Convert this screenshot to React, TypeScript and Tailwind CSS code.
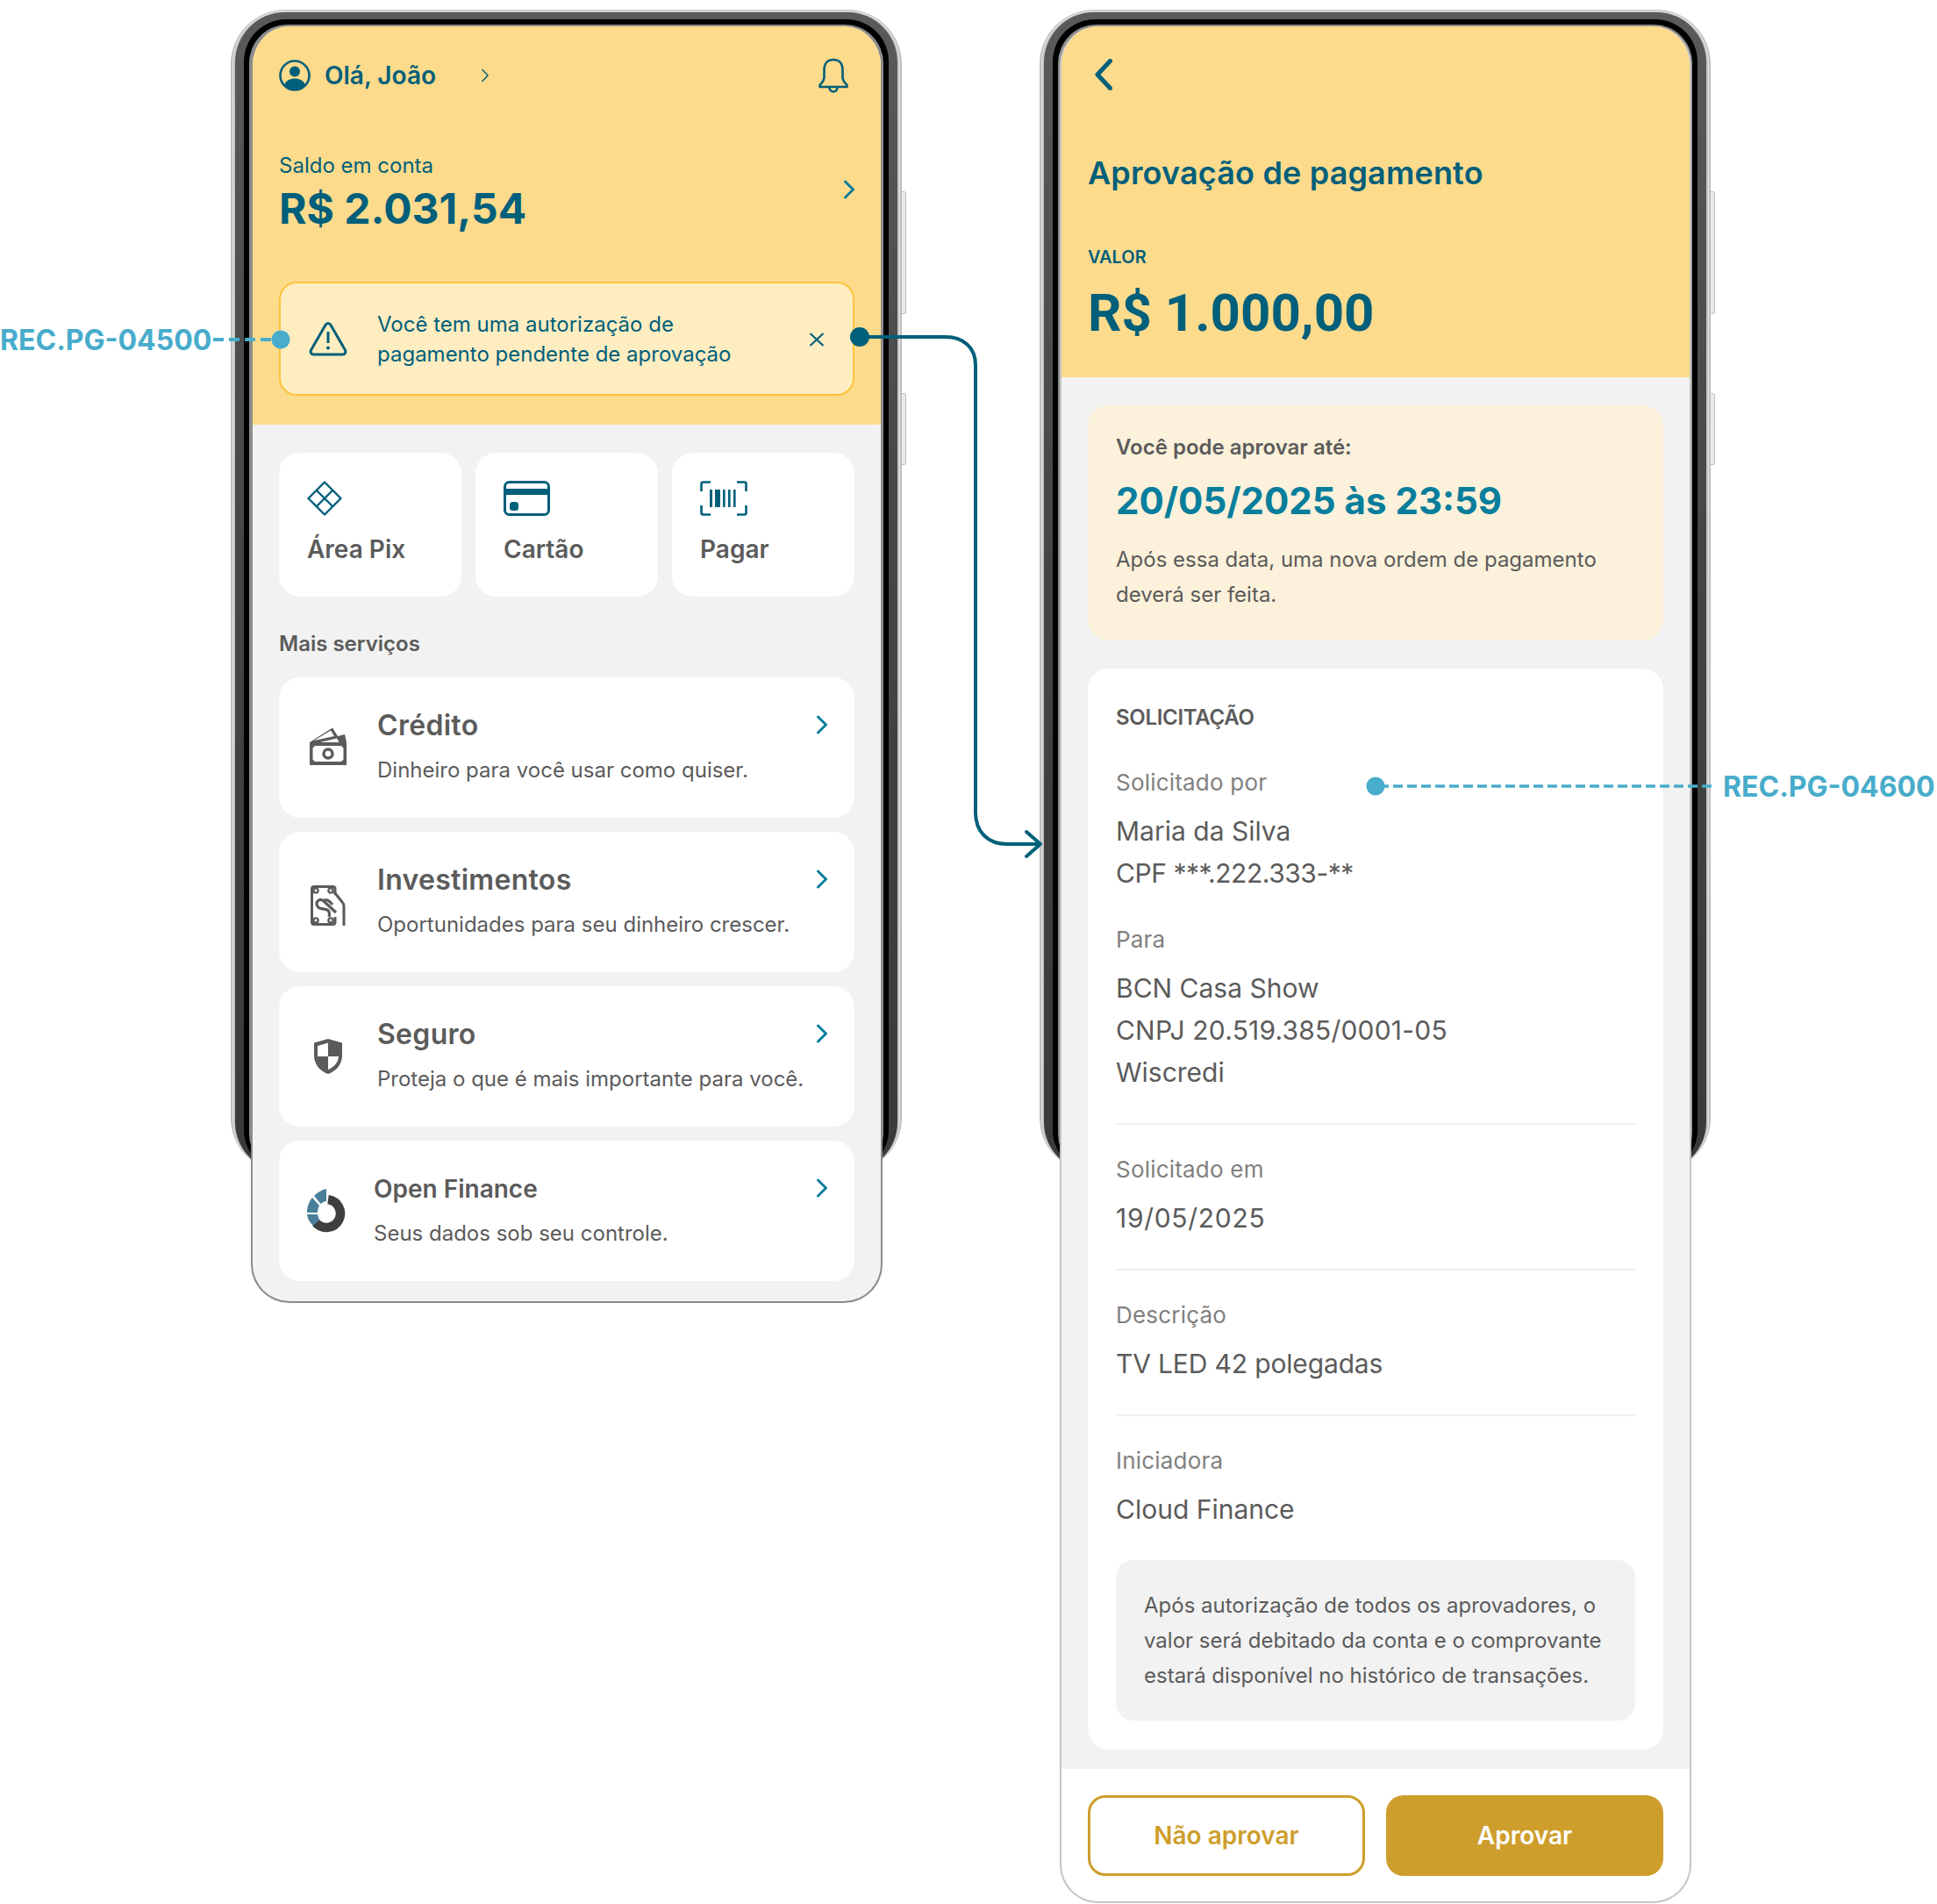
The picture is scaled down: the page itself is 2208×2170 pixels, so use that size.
// App.tsx
const TEAL = "#005F7A";
const GRAY = "#5B5B5B";

const Chevron = ({ className = "" }: { className?: string }) => (
  <svg viewBox="0 0 14 22" fill="none" className={className}>
    <path d="M2.5 2 L11.5 11 L2.5 20" stroke="currentColor" strokeWidth="3" strokeLinecap="round" strokeLinejoin="round" />
  </svg>
);

const UserIcon = () => (
  <svg viewBox="0 0 36 36" className="w-[36px] h-[36px] shrink-0">
    <circle cx="18" cy="18" r="16.5" fill="none" stroke={TEAL} strokeWidth="2.6" />
    <circle cx="18" cy="13.5" r="6" fill={TEAL} />
    <path d="M6 29 C8 23.5 12.5 21.5 18 21.5 C23.5 21.5 28 23.5 30 29 C27 32.6 22.8 34.5 18 34.5 C13.2 34.5 9 32.6 6 29 Z" fill={TEAL} />
  </svg>
);

const BellIcon = () => (
  <svg viewBox="0 0 36 40" fill="none" className="w-[36px] h-[40px]">
    <path d="M18 2 C11 2 7.5 7 7.5 13.5 V22 C7.5 26 5.5 28 2.5 31 V33 H33.5 V31 C30.5 28 28.5 26 28.5 22 V13.5 C28.5 7 25 2 18 2 Z" stroke={TEAL} strokeWidth="2.6" strokeLinejoin="round" />
    <path d="M13.5 33.5 C13.5 36.5 15.5 38.5 18 38.5 C20.5 38.5 22.5 36.5 22.5 33.5" stroke={TEAL} strokeWidth="2.6" />
  </svg>
);

const WarnIcon = () => (
  <svg viewBox="0 0 44 40" fill="none" className="w-[44px] h-[40px] shrink-0">
    <path d="M22 2.5 C20.6 2.5 19.8 3.2 19 4.6 L2.8 32.5 C1.2 35.2 2.6 38 5.6 38 H38.4 C41.4 38 42.8 35.2 41.2 32.5 L25 4.6 C24.2 3.2 23.4 2.5 22 2.5 Z" stroke={TEAL} strokeWidth="3" strokeLinejoin="round" />
    <path d="M22 12 V25" stroke={TEAL} strokeWidth="3" />
    <circle cx="22" cy="30.5" r="2" fill={TEAL} />
  </svg>
);

const PixIcon = () => (
  <svg viewBox="0 0 40 40" fill="none" className="w-[40px] h-[40px]">
    <path d="M20 1.5 L38.5 20 L20 38.5 L1.5 20 Z" stroke={TEAL} strokeWidth="2.4" strokeLinejoin="round" />
    <path d="M10.75 10.75 L29.25 29.25 M29.25 10.75 L10.75 29.25" stroke={TEAL} strokeWidth="2.4" />
  </svg>
);

const CardIcon = () => (
  <svg viewBox="0 0 53 40" fill="none" className="w-[53px] h-[40px]">
    <rect x="1.5" y="1.5" width="50" height="37" rx="5" stroke={TEAL} strokeWidth="3" />
    <rect x="2" y="9" width="49" height="7" fill={TEAL} />
    <rect x="7" y="24" width="10" height="10" rx="3.5" fill={TEAL} />
  </svg>
);

const BarcodeIcon = () => (
  <svg viewBox="0 0 54 40" fill="none" className="w-[54px] h-[40px]">
    <path d="M12 1.5 H3.5 Q1.5 1.5 1.5 3.5 V12 M42 1.5 H50.5 Q52.5 1.5 52.5 3.5 V12 M12 38.5 H3.5 Q1.5 38.5 1.5 36.5 V28 M42 38.5 H50.5 Q52.5 38.5 52.5 36.5 V28" stroke={TEAL} strokeWidth="2.6" />
    <rect x="11" y="10" width="3" height="20" fill={TEAL} />
    <rect x="17" y="10" width="6" height="20" fill={TEAL} />
    <rect x="26" y="10" width="2.6" height="20" fill={TEAL} />
    <rect x="32" y="10" width="2.6" height="20" fill={TEAL} />
    <rect x="38" y="10" width="2.6" height="20" fill={TEAL} />
  </svg>
);

const MoneyIcon = () => (
  <svg viewBox="0 0 42 43" className="w-[42px] h-[43px] -mt-[3px]">
    <path d="M0 17 L26 0.5 L32 10 L40 8 L42 17 H33.5 L31 12.5 L12 17 Z M5 15 L24 3.5 L28 10 Z" fill={GRAY} fillRule="evenodd" />
    <path fillRule="evenodd" d="M0 17 H42 V43 H0 Z M6 21 L3.5 23.5 V36.5 L6 39 H36 L38.5 36.5 V23.5 L36 21 Z" fill={GRAY} />
    <circle cx="21" cy="30" r="5" fill="none" stroke={GRAY} strokeWidth="3.4" />
  </svg>
);

const InvestIcon = () => (
  <svg viewBox="0 0 40 46" fill="none" className="w-[40px] h-[46px] mt-[8px]">
    <path d="M28 11 V4 Q28 1.5 25.5 1.5 H4 Q1.5 1.5 1.5 4 V42 Q1.5 44.5 4 44.5 H25.5 Q28 44.5 28 42 V36" stroke={GRAY} strokeWidth="3" />
    <circle cx="6" cy="6" r="2.6" fill="white" stroke={GRAY} strokeWidth="2.4" />
    <circle cx="23" cy="6" r="2.6" fill="white" stroke={GRAY} strokeWidth="2.4" />
    <circle cx="6" cy="40" r="2.6" fill="white" stroke={GRAY} strokeWidth="2.4" />
    <circle cx="23" cy="40" r="2.6" fill="white" stroke={GRAY} strokeWidth="2.4" />
    <path d="M28 9 L36 19 Q38 21 38 24 V45" stroke={GRAY} strokeWidth="3" strokeLinecap="round" />
    <path d="M29 31 L15 18 C10 14 5 19 8 24 C10 28 15 26 19 28 C21 29 22 32 21 36" stroke={GRAY} strokeWidth="3.2" />
    <path d="M14 18 C18 15 21 17 25 22" stroke={GRAY} strokeWidth="3" />
  </svg>
);

const ShieldIcon = () => (
  <svg viewBox="0 0 32 40" className="w-[32px] h-[40px]">
    <path fillRule="evenodd" fill={GRAY} d="M16 0 L32 4.5 V19 C32 29 25 37 16 40 C7 37 0 29 0 19 V4.5 Z M16 20 V4.5 L4 8 V20 Z M16 20 V35 C22.5 32.5 27.5 27 28 20 Z" />
  </svg>
);

// donut split in a dark arc and three blue blocks
const OpenFinanceIcon = () => (
  <svg viewBox="0 0 44 50" fill="none" className="w-[44px] h-[50px]">
    <path d="M24 12.1 A16 16 0 1 1 10 38.6" stroke="#3E3E3E" strokeWidth="10.5" />
    <path d="M8 8 C11.5 4 17 1 22 0 V14 C20 14 17.5 15.5 15.5 17 Z" fill="#4A7F9A" />
    <path d="M6 10 L14 19 C13 21 12 24 12 27 H0 C0 20 2.5 14 6 10 Z" fill="#4A7F9A" />
    <path d="M0 29 H12 C12.5 31 13 33 14 35 L7 42 C3 38 0.5 34 0 29 Z" fill="#4A7F9A" />
  </svg>
);

const QuickCard = ({ icon, label }: { icon: React.ReactNode; label: string }) => (
  <div className="bg-white rounded-[24px] h-[164px] pl-[32px] pt-[32px]">
    <div className="h-[40px] flex items-center">{icon}</div>
    <p className="mt-[20px] text-[28px] leading-[36px] font-semibold text-[#5B5B5B]">{label}</p>
  </div>
);

const ServiceRow = ({
  icon,
  title,
  desc,
  small,
}: {
  icon: React.ReactNode;
  title: string;
  desc: string;
  small?: boolean;
}) => (
  <div className="relative bg-white rounded-[24px] h-[160px] flex items-center">
    <div className={`shrink-0 flex justify-center ${small ? "w-[108px]" : "w-[112px]"}`}>{icon}</div>
    <div>
      <p className={`font-semibold text-[#5B5B5B] ${small ? "text-[28px]" : "text-[32px] tracking-[0.3px]"} leading-[40px] mb-[11px]`}>{title}</p>
      <p className="text-[24px] leading-[40px] text-[#5B5B5B]">{desc}</p>
    </div>
    <Chevron className="absolute right-[30px] top-[43px] w-[14px] h-[22px] text-[#0A7E9E]" />
  </div>
);

// a few value lines run a little wider or narrower than plain Inter
const lineTracking: Record<string, string> = {
  "CPF ***.222.333-**": "tracking-[-0.45px]",
  "CNPJ 20.519.385/0001-05": "tracking-[0.2px]",
  "19/05/2025": "tracking-[0.7px]",
  "TV LED 42 polegadas": "tracking-[-0.15px]",
};

const Field = ({ label, lines, className = "" }: { label: string; lines: string[]; className?: string }) => (
  <div className={className}>
    <p className="text-[26px] tracking-[0.2px] leading-[40px] text-[#808080] mb-[11px]">{label}</p>
    {lines.map((l) => (
      <p key={l} className={`text-[30px] leading-[48px] text-[#5B5B5B] ${lineTracking[l] ?? ""}`}>
        {l}
      </p>
    ))}
  </div>
);

const PhoneFrame = () => (
  <>
    <div className="absolute left-[-23px] right-[-22px] top-[-19px] h-[1325px] rounded-[62px] bg-[#BDBDBD] pt-[1px] px-[2px]">
      <div className="h-full rounded-[60px] bg-[#E6E6E6] pt-[1px] px-[1px]">
        <div className="h-full rounded-[59px] bg-[#C4C4C4] pt-[1px] px-[2px]">
          <div className="h-full rounded-[57px] bg-gradient-to-b from-[#5A5A5A] via-[#444444] to-[#3A3A3A] pt-[8px] px-[10px]">
            <div className="h-full rounded-[48px] bg-black pt-[6px] px-[6px]">
              <div className="h-full rounded-[44px] bg-[#8C8C8C]" />
            </div>
          </div>
        </div>
      </div>
    </div>
    <div className="absolute right-[-27px] top-[188px] w-[5px] h-[140px] rounded-r-[3px] bg-[#EAEAEA] border border-l-0 border-[#BDBDBD]" />
    <div className="absolute right-[-27px] top-[418px] w-[5px] h-[82px] rounded-r-[3px] bg-[#EAEAEA] border border-l-0 border-[#BDBDBD]" />
  </>
);

const HomeScreen = () => (
  <div className="relative w-[720px] shrink-0">
    <PhoneFrame />
    <div className="relative h-[1455px] rounded-[44px] overflow-hidden border-[2px] border-t-0 border-[#8C8C8C] bg-[#F2F2F2]">
      <div className="bg-[#FDDB8C] h-[454px] px-[30px] pt-[36px] text-[#005F7A]">
        <div className="flex items-center h-[40px]">
          <UserIcon />
          <span className="ml-[16px] text-[28px] font-semibold">Olá, João</span>
          <Chevron className="ml-[51px] w-[10px] h-[16px] [&_path]:[stroke-width:2]" />
          <div className="ml-auto mr-[6px]">
            <BellIcon />
          </div>
        </div>
        <div className="relative mt-[67px]">
          <p className="text-[24px] leading-[32px]">Saldo em conta</p>
          <p className="mt-[5px] text-[48px] leading-[56px] font-bold">R$ 2.031,54</p>
          <Chevron className="absolute right-[-1px] top-[32px] w-[14px] h-[22px] text-[#0A7E9E]" />
        </div>
        <div className="mt-[55px] h-[130px] rounded-[20px] border-[2px] border-[#FFC23C] bg-[#FEEDC0] flex items-center pl-[32px] relative">
          <WarnIcon />
          <p className="ml-[34px] pt-[2px] text-[24px] leading-[34px]">
            Você tem uma autorização de
            <br />
            pagamento pendente de aprovação
          </p>
          <svg viewBox="0 0 18 16" className="absolute right-[32px] top-[56px] w-[18px] h-[16px]">
            <path d="M1.5 1 L16.5 15 M16.5 1 L1.5 15" stroke={TEAL} strokeWidth="2.2" fill="none" />
          </svg>
        </div>
      </div>
      <div className="px-[30px] pt-[32px]">
        <div className="grid grid-cols-3 gap-[16px]">
          <QuickCard icon={<PixIcon />} label="Área Pix" />
          <QuickCard icon={<CardIcon />} label="Cartão" />
          <QuickCard icon={<BarcodeIcon />} label="Pagar" />
        </div>
        <p className="mt-[37px] mb-[21px] text-[24px] leading-[34px] font-semibold text-[#5B5B5B]">Mais serviços</p>
        <div className="flex flex-col gap-[16px]">
          <ServiceRow icon={<MoneyIcon />} title="Crédito" desc="Dinheiro para você usar como quiser." />
          <ServiceRow icon={<InvestIcon />} title="Investimentos" desc="Oportunidades para seu dinheiro crescer." />
          <ServiceRow icon={<ShieldIcon />} title="Seguro" desc="Proteja o que é mais importante para você." />
          <ServiceRow small icon={<OpenFinanceIcon />} title="Open Finance" desc="Seus dados sob seu controle." />
        </div>
      </div>
    </div>
  </div>
);

const ApprovalScreen = () => (
  <div className="relative w-[720px] shrink-0">
    <PhoneFrame />
    <div className="relative h-[2139px] rounded-[44px] overflow-hidden border-[2px] border-t-0 border-[#C4C4C4] bg-[#F2F2F2] flex flex-col">
      <div className="bg-[#FDDB8C] h-[400px] px-[30px] pt-[37px] text-[#005F7A]">
        <svg viewBox="0 0 20 36" fill="none" className="ml-[8px] w-[20px] h-[36px]">
          <path d="M17.5 2.5 L3 18 L17.5 33.5" stroke={TEAL} strokeWidth="5" strokeLinecap="round" strokeLinejoin="round" />
        </svg>
        <h1 className="mt-[70px] text-[36px] tracking-[0.15px] leading-[48px] font-semibold">Aprovação de pagamento</h1>
        <p className="mt-[58px] text-[20px] leading-[28px] font-semibold">VALOR</p>
        <p className="mt-[14px] font-['Roboto',sans-serif] text-[60px] leading-[72px] font-bold">R$ 1.000,00</p>
      </div>
      <div className="flex-1 px-[30px] pt-[32px]">
        <div className="h-[268px] rounded-[24px] bg-[#FCF1DA] px-[32px] pt-[31px]">
          <p className="text-[24px] leading-[34px] font-semibold text-[#5B5B5B]">Você pode aprovar até:</p>
          <p className="mt-[16px] text-[42px] leading-[56px] font-bold text-[#087E9D]">20/05/2025 às 23:59</p>
          <p className="mt-[19px] text-[24px] leading-[40px] text-[#5B5B5B]">
            Após essa data, uma nova ordem de pagamento
            <br />
            deverá ser feita.
          </p>
        </div>
        <div className="mt-[32px] h-[1232px] rounded-[24px] bg-white px-[32px] pt-[32px]">
          <p className="text-[24px] tracking-[-0.3px] leading-[48px] font-semibold text-[#5B5B5B]">SOLICITAÇÃO</p>
          <Field className="mt-[30px]" label="Solicitado por" lines={["Maria da Silva", "CPF ***.222.333-**"]} />
          <Field className="mt-[32px] pb-[34px] border-b-[2px] border-[#F0F0F0]" label="Para" lines={["BCN Casa Show", "CNPJ 20.519.385/0001-05", "Wiscredi"]} />
          <Field className="pt-[31px] pb-[34px] border-b-[2px] border-[#F0F0F0]" label="Solicitado em" lines={["19/05/2025"]} />
          <Field className="pt-[31px] pb-[34px] border-b-[2px] border-[#F0F0F0]" label="Descrição" lines={["TV LED 42 polegadas"]} />
          <Field className="pt-[31px]" label="Iniciadora" lines={["Cloud Finance"]} />
          <div className="mt-[34px] h-[183px] rounded-[20px] bg-[#F2F2F2] px-[32px] pt-[32px] text-[24px] leading-[40px] text-[#5B5B5B]">
            Após autorização de todos os aprovadores, o
            <br />
            valor será debitado da conta e o comprovante
            <br />
            estará disponível no histórico de transações.
          </div>
        </div>
      </div>
      <div className="bg-white h-[151px] px-[30px] pt-[30px] grid grid-cols-2 gap-[24px] shrink-0">
        <button className="h-[92px] rounded-[20px] border-[3px] border-[#CE9E2C] bg-white text-[28px] font-semibold text-[#CE9E2C]">Não aprovar</button>
        <button className="h-[92px] rounded-[20px] bg-[#CE9E2C] text-[28px] font-semibold text-white">Aprovar</button>
      </div>
    </div>
  </div>
);

const App = () => {
  return (
    <div className="relative w-[2208px] h-[2170px] bg-white overflow-hidden font-['Inter',sans-serif]">
      <div className="flex items-start gap-[202px] pl-[286px] pt-[30px]">
        <HomeScreen />
        <ApprovalScreen />
      </div>

      {/* annotations over the screens */}
      <svg className="absolute inset-0 w-[2208px] h-[2170px] pointer-events-none" viewBox="0 0 2208 2170" fill="none">
        <path d="M243 387 H312" stroke="#48ACCB" strokeWidth="4" strokeDasharray="12 6" />
        <circle cx="320" cy="387" r="10.5" fill="#48ACCB" />
        <circle cx="980" cy="384" r="11" fill={TEAL} />
        <path d="M985 384 H1078 C1098 384 1112 396 1112 416 V926 C1112 948 1126 962 1148 962 H1184" stroke={TEAL} strokeWidth="4" />
        <path d="M1170 948 L1186 962 L1170 976" stroke={TEAL} strokeWidth="4" strokeLinecap="round" strokeLinejoin="round" />
        <circle cx="1568" cy="896" r="10.5" fill="#48ACCB" />
        <path d="M1572 896 H1952" stroke="#48ACCB" strokeWidth="3.5" strokeDasharray="11 5" />
      </svg>
      <p className="absolute left-0 top-[368px] text-[32px] leading-[40px] font-bold text-[#48ACCB]">REC.PG-04500</p>
      <p className="absolute left-[1964px] top-[877px] text-[32px] leading-[40px] font-bold text-[#48ACCB]">REC.PG-04600</p>
    </div>
  );
};

export default App;
